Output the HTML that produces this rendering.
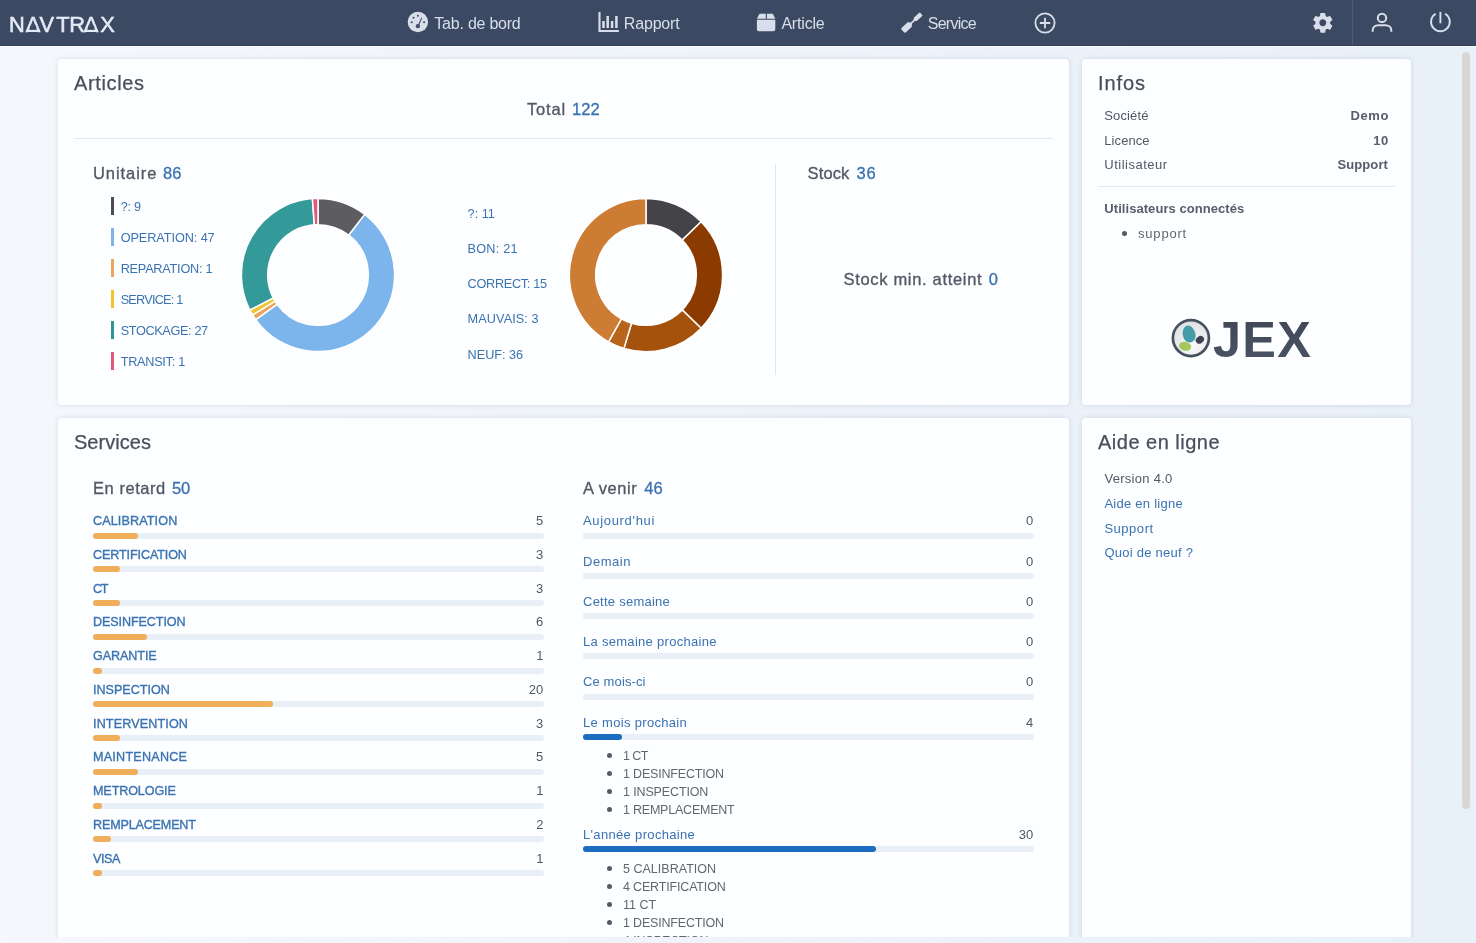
<!DOCTYPE html>
<html lang="fr">
<head>
<meta charset="utf-8">
<title>NAVTRAX - Tab. de bord</title>
<style>
*{box-sizing:border-box}
html,body{margin:0;padding:0}
body{width:1476px;height:943px;overflow:hidden;position:relative;
  font-family:"Liberation Sans",sans-serif;font-size:13px;color:#4b5260;
  background:linear-gradient(90deg,#f5f7fc 0%,#eef3fa 55%,#e8f0f8 100%)}
a{text-decoration:none}
h2,ul,li{margin:0;padding:0;font-weight:400;list-style:none}
.t{position:absolute;white-space:nowrap;display:block}
.card,#nav{will-change:transform}
.f0{font-size:16px;line-height:20px;color:#d9dfea}
.f1{font-size:20px;line-height:26px;color:#494f5b;-webkit-text-stroke:0.25px #494f5b}
.f2{font-size:16.5px;line-height:20px;color:#525864;-webkit-text-stroke:0.32px #525864}
.f3{font-size:16.5px;line-height:20px;color:#3a73b1;-webkit-text-stroke:0.32px #3a73b1}
.f4{font-size:12.7px;line-height:20px;color:#3a73b1}
.f5{font-size:13px;line-height:20px;color:#525864}
.f6{font-size:13px;line-height:20px;color:#565d6b;font-weight:700}
.f7{font-size:13px;line-height:20px;color:#62676f}
.f8{font-size:12.6px;line-height:20px;color:#3a73b1;-webkit-text-stroke:0.35px #3a73b1}
.f9{font-size:13px;line-height:20px;color:#3a73b1}
.f10{font-size:12.5px;line-height:20px;color:#62676f}

/* ---------- navbar ---------- */
#nav{position:absolute;left:0;top:0;width:1476px;height:46px;background:#3c4963;
  border-bottom:1px solid #343e56;box-shadow:0 1px 0 #f9fbfe;z-index:5}
#nav svg{position:absolute;display:block}
#nav .sep{position:absolute;left:1352px;top:0;width:1px;height:45px;background:#4d5a74}
/* ---------- cards ---------- */
#clip{position:absolute;left:0;top:45px;width:1476px;height:892px;overflow:hidden}
.card{position:absolute;background:#fdfeff;border-radius:4px;box-shadow:0 0 5px rgba(95,105,135,.2)}
.abs{position:absolute}
hr{position:absolute;margin:0;border:0;height:1px;background:#e3e7ee}
.lb{position:absolute;left:53px;width:3px;height:18px}
.bar{position:absolute;width:451px;height:6px;border-radius:3px;background:#e9eff7}
.bar i{display:block;height:6px;border-radius:3px;background:#f0ad5a}
.bar.b i{background:#1c6dc1}
li.t:before{content:"";position:absolute;left:-16px;top:7px;width:5px;height:5px;border-radius:50%;background:#545a66}
</style>
</head>
<body>

<div id="nav">
  <svg id="logo" style="left:0;top:8px" width="130" height="30" viewBox="0 0 130 30" fill="#e4eaf6">
    <text x="9.1 25.85 39.6 56.2 69.2 83.85 100.35" y="24" font-family="Liberation Sans, sans-serif" font-size="21.8" stroke="#e4eaf6" stroke-width=".55">NAVTRAX</text>
    <polygon points="29.51,20.29 36.73,20.29 35.64,17.13 30.60,17.13" fill="#3c4963"/><rect x="26.35" y="21.85" width="13.54" height="2.150"/><polygon points="87.51,20.29 94.73,20.29 93.64,17.13 88.60,17.13" fill="#3c4963"/><rect x="84.35" y="21.85" width="13.54" height="2.150"/>
  </svg>

  <!-- Tab. de bord -->
  <svg style="left:407px;top:11.400px" width="22" height="22" viewBox="0 0 22 22">
    <circle cx="10.900" cy="11" r="10.200" fill="#d9dfea"/>
    <g fill="#3c4963"><circle cx="4.700" cy="11.200" r="1.050"/><circle cx="6.500" cy="6.800" r="1.050"/><circle cx="10.900" cy="4.800" r="1.050"/><circle cx="17.100" cy="11.200" r="1.050"/>
    <circle cx="10.900" cy="15.200" r="2.100"/><path d="M14.300 6.600l.900.400-3.600 8.200-.900-.400z"/></g>
    <circle cx="10.900" cy="15.200" r=".7" fill="#55658a"/>
  </svg>
  <span class="t f0" style="left:434.35px;top:14px;letter-spacing:-0.23px">Tab. de bord</span>

  <!-- Rapport -->
  <svg style="left:597px;top:11px" width="23" height="23" viewBox="0 0 23 23" fill="none" stroke="#d9dfea">
    <path d="M2.500 .9v19.100h19.400" stroke-width="2.100"/>
    <path d="M6.500 10v7M10.700 5.100v11.900M15.100 10v7M19.400 5.100v11.900" stroke-width="2.500"/>
  </svg>
  <span class="t f0" style="left:623.85px;top:14px;letter-spacing:-0.18px">Rapport</span>

  <!-- Article -->
  <svg style="left:756px;top:12px" width="21" height="21" viewBox="0 0 21 21" fill="#d9dfea">
    <path d="M4 1.700h5.800v5H.9l2.200-4.500q.3-.5.900-.5zM10.900 1.700h5.300q.6 0 .9.500l2.200 4.500h-8.400zM.9 7.700h18.400v9.600a2 2 0 0 1-2 2H2.900a2 2 0 0 1-2-2z"/>
  </svg>
  <span class="t f0" style="left:781.4px;top:14px;letter-spacing:-0.19px">Article</span>

  <!-- Service -->
  <svg style="left:900px;top:11px" width="24" height="24" viewBox="0 0 24 24" fill="#d9dfea">
    <path transform="translate(2.760 19.970) rotate(-42.600)" d="M1.200-3.100H9.500L11.600-.9H15.600L17-2.200H24.400Q25.200-2.200 25.200-1.400V1.400Q25.200 2.200 24.400 2.200H17L15.600.9H11.600L9.500 3.100H1.200Q0 3.100 0 1.900V-1.900Q0-3.100 1.200-3.100Z"/>
  </svg>
  <span class="t f0" style="left:927.75px;top:14px;letter-spacing:-0.73px">Service</span>

  <!-- plus -->
  <svg style="left:1034px;top:11.500px" width="22" height="22" viewBox="0 0 22 22" fill="none" stroke="#d9dfea" stroke-width="1.800">
    <circle cx="11" cy="11" r="9.600"/><path d="M11 5.800v10.400M5.800 11h10.400"/>
  </svg>

  <!-- gear -->
  <svg style="left:1310.600px;top:10.600px" width="23.600" height="23.600" viewBox="0 0 24 24">
    <path fill="#d9dfea" d="M19.430 12.980c.04-.32.07-.64.07-.98s-.03-.66-.07-.98l2.110-1.650c.19-.15.240-.42.120-.64l-2-3.460c-.12-.22-.39-.3-.61-.22l-2.490 1c-.52-.4-1.080-.73-1.690-.98l-.38-2.650A.488.488 0 0 0 14 2h-4c-.25 0-.46.180-.49.420l-.38 2.650c-.61.250-1.170.59-1.690.98l-2.490-1c-.23-.09-.49 0-.61.220l-2 3.460c-.13.220-.07.49.120.64l2.110 1.650c-.04.320-.07.650-.07.980s.03.660.07.980l-2.110 1.650c-.19.150-.24.420-.12.640l2 3.460c.12.220.39.300.61.220l2.490-1c.52.400 1.080.73 1.690.98l.38 2.650c.03.240.24.420.49.420h4c.25 0 .46-.18.490-.42l.38-2.650c.61-.25 1.170-.59 1.690-.98l2.490 1c.23.090.49 0 .61-.22l2-3.460c.12-.22.070-.49-.12-.64l-2.110-1.650zM12 15.500c-1.930 0-3.500-1.570-3.500-3.500s1.570-3.500 3.500-3.500 3.500 1.570 3.500 3.500-1.570 3.500-3.500 3.500z"/>
  </svg>
  <div class="sep"></div>
  <!-- user -->
  <svg style="left:1370px;top:10px" width="24" height="24" viewBox="0 0 24 24" fill="none" stroke="#d9dfea" stroke-width="2">
    <circle cx="12" cy="7.900" r="4.200"/><path d="M2.700 21.800v-1.500c0-3.200 2.600-5 5.800-5h7c3.200 0 5.800 1.800 5.800 5v1.500"/>
  </svg>
  <!-- power -->
  <svg style="left:1428px;top:10px" width="24" height="24" viewBox="0 0 24 24" fill="none" stroke="#d9dfea" stroke-width="1.900" stroke-linecap="butt">
    <path d="M12.400 1.900v11.400"/><path d="M7.700 3.700a9.400 9.400 0 1 0 9.400 0"/>
  </svg>
</div>

<div id="clip">
<!-- ======================= Articles ======================= -->
<div class="card" id="articles" style="left:58px;top:14px;width:1011px;height:346px">
  <h2 class="t f1" style="left:16px;top:11px;letter-spacing:0.63px">Articles</h2>
  <div><span class="t f2" style="left:469.05px;top:40px;letter-spacing:0.81px">Total</span><span class="t f3" style="left:514.1px;top:40px">122</span></div>
  <hr style="left:16px;top:79px;width:979px">

  <div><span class="t f2" style="left:35px;top:104px;letter-spacing:0.94px">Unitaire</span><span class="t f3" style="left:105px;top:104px;letter-spacing:0.15px">86</span></div>
  <div class="legend"><i class="lb" style="top:138px;background:#4b4b50"></i><i class="lb" style="top:169px;background:#7cb5ec"></i><i class="lb" style="top:200px;background:#eaa45e"></i><i class="lb" style="top:231px;background:#f0c42f"></i><i class="lb" style="top:262px;background:#2f9493"></i><i class="lb" style="top:293px;background:#e05a7e"></i>
  <span class="t f4" style="left:62.7px;top:138px;letter-spacing:-0.27px">?: 9</span><span class="t f4" style="left:62.7px;top:169px;letter-spacing:-0.08px">OPERATION: 47</span><span class="t f4" style="left:62.7px;top:200px;letter-spacing:-0.23px">REPARATION: 1</span><span class="t f4" style="left:62.7px;top:231px;letter-spacing:-0.78px">SERVICE: 1</span><span class="t f4" style="left:62.7px;top:262px;letter-spacing:-0.36px">STOCKAGE: 27</span><span class="t f4" style="left:62.7px;top:293px;letter-spacing:-0.27px">TRANSIT: 1</span></div>
  <svg class="abs" style="left:182px;top:137.500px" width="156" height="156" viewBox="0 0 156 156">
<path d="M78.00 1.40A76.6 76.6 0 0 1 124.82 17.37L108.74 38.19A50.3 50.3 0 0 0 78.00 27.70Z" fill="#5c5c61" stroke="#fff" stroke-width="1.5" stroke-linejoin="round"/>
<path d="M124.82 17.37A76.6 76.6 0 1 1 15.70 122.57L37.09 107.27A50.3 50.3 0 1 0 108.74 38.19Z" fill="#7cb5ec" stroke="#fff" stroke-width="1.5" stroke-linejoin="round"/>
<path d="M15.70 122.57A76.6 76.6 0 0 1 12.61 117.90L35.06 104.20A50.3 50.3 0 0 0 37.09 107.27Z" fill="#eaa45e" stroke="#fff" stroke-width="1.5" stroke-linejoin="round"/>
<path d="M12.61 117.90A76.6 76.6 0 0 1 9.88 113.02L33.27 101.00A50.3 50.3 0 0 0 35.06 104.20Z" fill="#f0c42f" stroke="#fff" stroke-width="1.5" stroke-linejoin="round"/>
<path d="M9.88 113.02A76.6 76.6 0 0 1 72.41 1.60L74.33 27.83A50.3 50.3 0 0 0 33.27 101.00Z" fill="#339999" stroke="#fff" stroke-width="1.5" stroke-linejoin="round"/>
<path d="M72.41 1.60A76.6 76.6 0 0 1 78.00 1.40L78.00 27.70A50.3 50.3 0 0 0 74.33 27.83Z" fill="#e05a7e" stroke="#fff" stroke-width="1.5" stroke-linejoin="round"/>
  </svg>

  <div class="legend"><span class="t f4" style="left:409.6px;top:145px;letter-spacing:-0.01px">?: 11</span><span class="t f4" style="left:409.6px;top:180px;letter-spacing:0.22px">BON: 21</span><span class="t f4" style="left:409.6px;top:215px;letter-spacing:-0.3px">CORRECT: 15</span><span class="t f4" style="left:409.6px;top:250px;letter-spacing:0.08px">MAUVAIS: 3</span><span class="t f4" style="left:409.6px;top:286px;letter-spacing:-0.02px">NEUF: 36</span></div>
  <svg class="abs" style="left:510px;top:137.500px" width="156" height="156" viewBox="0 0 156 156">
<path d="M78.00 1.40A76.6 76.6 0 0 1 133.14 24.83L114.21 43.09A50.3 50.3 0 0 0 78.00 27.70Z" fill="#434348" stroke="#fff" stroke-width="1.5" stroke-linejoin="round"/>
<path d="M133.14 24.83A76.6 76.6 0 0 1 133.14 131.17L114.21 112.91A50.3 50.3 0 0 0 114.21 43.09Z" fill="#8b3a00" stroke="#fff" stroke-width="1.5" stroke-linejoin="round"/>
<path d="M133.14 131.17A76.6 76.6 0 0 1 55.93 151.35L63.51 126.17A50.3 50.3 0 0 0 114.21 112.91Z" fill="#a5530c" stroke="#fff" stroke-width="1.5" stroke-linejoin="round"/>
<path d="M55.93 151.35A76.6 76.6 0 0 1 40.51 144.80L53.38 121.86A50.3 50.3 0 0 0 63.51 126.17Z" fill="#b8651b" stroke="#fff" stroke-width="1.5" stroke-linejoin="round"/>
<path d="M40.51 144.80A76.6 76.6 0 0 1 78.00 1.40L78.00 27.70A50.3 50.3 0 0 0 53.38 121.86Z" fill="#cc7c33" stroke="#fff" stroke-width="1.5" stroke-linejoin="round"/>
  </svg>

  <div class="abs" style="left:717px;top:105px;width:1px;height:211px;background:#e2e5ea"></div>
  <div><span class="t f2" style="left:749.6px;top:104px;letter-spacing:0.12px">Stock</span><span class="t f3" style="left:798.5px;top:104px;letter-spacing:0.85px">36</span></div>
  <div><span class="t f2" style="left:785.5px;top:210px;letter-spacing:0.68px">Stock min. atteint</span><span class="t f3" style="left:930.75px;top:210px">0</span></div>
</div>

<!-- ======================= Infos ======================= -->
<div class="card" id="infos" style="left:1082px;top:14px;width:329px;height:346px">
  <h2 class="t f1" style="left:16px;top:11px;letter-spacing:0.89px">Infos</h2>
  <div><span class="t f5" style="left:22.3px;top:47px;letter-spacing:0.12px">Société</span><span class="t f6" style="left:268.55px;top:47px;letter-spacing:0.58px">Demo</span></div>
  <div><span class="t f5" style="left:22.3px;top:72px;letter-spacing:0.07px">Licence</span><span class="t f6" style="left:291.25px;top:72px;letter-spacing:0.55px">10</span></div>
  <div><span class="t f5" style="left:22.3px;top:96px;letter-spacing:0.5px">Utilisateur</span><span class="t f6" style="left:255.5px;top:96px;letter-spacing:0.09px">Support</span></div>
  <hr style="left:16px;top:127px;width:297px">
  <span class="t f6" style="left:22.3px;top:140px;letter-spacing:0.06px">Utilisateurs connectés</span>
  <ul><li class="t f7" style="left:56px;top:165px;letter-spacing:0.81px">support</li></ul>
  <svg class="abs" style="left:84px;top:258px" width="160" height="46" viewBox="0 0 160 46">
    <defs>
      <radialGradient id="jg" cx="55%" cy="70%" r="70%"><stop offset="0" stop-color="#fbfbfc"/><stop offset="1" stop-color="#dcdfe3"/></radialGradient>
      <linearGradient id="jt" x1="0" y1="0" x2="0" y2="1"><stop offset="0" stop-color="#3e4656"/><stop offset="1" stop-color="#4c5565"/></linearGradient>
    </defs>
    <circle cx="24.900" cy="21.100" r="18" fill="url(#jg)" stroke="#47505f" stroke-width="2.700"/>
    <path transform="rotate(-14 23 17)" d="M23 8.400c3.600 0 6.300 4.600 6.300 9.400 0 4.600-2.700 7.700-6.300 7.700s-6.300-3.100-6.300-7.700c0-4.800 2.700-9.400 6.300-9.400z" fill="#459da7"/>
    <ellipse cx="19.100" cy="29.300" rx="6.200" ry="4.400" transform="rotate(14 19.100 29.300)" fill="#a5c85c"/>
    <ellipse cx="33.900" cy="22.800" rx="4.400" ry="3.500" transform="rotate(-35 33.900 22.800)" fill="#3b4351"/>
    <text x="47" y="39.900" font-family="Liberation Sans, sans-serif" font-weight="700" font-size="50.400" letter-spacing="1.300" fill="url(#jt)">JEX</text>
  </svg>
</div>

<!-- ======================= Services ======================= -->
<div class="card" id="services" style="left:58px;top:373px;width:1011px;height:620px">
  <h2 class="t f1" style="left:16px;top:11px;letter-spacing:0.03px">Services</h2>
  <div><span class="t f2" style="left:35px;top:60px;letter-spacing:0.55px">En retard</span><span class="t f3" style="left:113.9px;top:60px">50</span></div>
<div class="row"><a class="t f8" style="left:35px;top:93px;letter-spacing:0.12px">CALIBRATION</a><span class="t f5" style="left:477.95px;top:93px">5</span><div class="bar" style="left:35px;top:115px"><i style="width:45px"></i></div></div>
<div class="row"><a class="t f8" style="left:35px;top:127px;letter-spacing:-0.12px">CERTIFICATION</a><span class="t f5" style="left:477.95px;top:127px">3</span><div class="bar" style="left:35px;top:148px"><i style="width:27px"></i></div></div>
<div class="row"><a class="t f8" style="left:35px;top:161px;letter-spacing:-1.45px">CT</a><span class="t f5" style="left:477.95px;top:161px">3</span><div class="bar" style="left:35px;top:182px"><i style="width:27px"></i></div></div>
<div class="row"><a class="t f8" style="left:35px;top:194px;letter-spacing:-0.11px">DESINFECTION</a><span class="t f5" style="left:477.95px;top:194px">6</span><div class="bar" style="left:35px;top:216px"><i style="width:54px"></i></div></div>
<div class="row"><a class="t f8" style="left:35px;top:228px;letter-spacing:-0.09px">GARANTIE</a><span class="t f5" style="left:478.2px;top:228px">1</span><div class="bar" style="left:35px;top:250px"><i style="width:9px"></i></div></div>
<div class="row"><a class="t f8" style="left:35px;top:262px;letter-spacing:-0.01px">INSPECTION</a><span class="t f5" style="left:470.7px;top:262px">20</span><div class="bar" style="left:35px;top:283px"><i style="width:180px"></i></div></div>
<div class="row"><a class="t f8" style="left:35px;top:296px;letter-spacing:0.13px">INTERVENTION</a><span class="t f5" style="left:477.95px;top:296px">3</span><div class="bar" style="left:35px;top:317px"><i style="width:27px"></i></div></div>
<div class="row"><a class="t f8" style="left:35px;top:329px;letter-spacing:0.23px">MAINTENANCE</a><span class="t f5" style="left:477.95px;top:329px">5</span><div class="bar" style="left:35px;top:351px"><i style="width:45px"></i></div></div>
<div class="row"><a class="t f8" style="left:35px;top:363px;letter-spacing:-0.12px">METROLOGIE</a><span class="t f5" style="left:478.2px;top:363px">1</span><div class="bar" style="left:35px;top:385px"><i style="width:9px"></i></div></div>
<div class="row"><a class="t f8" style="left:35px;top:397px;letter-spacing:-0.18px">REMPLACEMENT</a><span class="t f5" style="left:478.2px;top:397px">2</span><div class="bar" style="left:35px;top:418px"><i style="width:18px"></i></div></div>
<div class="row"><a class="t f8" style="left:35px;top:431px;letter-spacing:-0.4px">VISA</a><span class="t f5" style="left:478.2px;top:431px">1</span><div class="bar" style="left:35px;top:452px"><i style="width:9px"></i></div></div>

  <div><span class="t f2" style="left:525px;top:60px;letter-spacing:0.54px">A venir</span><span class="t f3" style="left:586.35px;top:60px;letter-spacing:0.1px">46</span></div>
<div class="row"><a class="t f9" style="left:525px;top:93px;letter-spacing:0.67px">Aujourd'hui</a><span class="t f5" style="left:968.05px;top:93px">0</span><div class="bar b" style="left:525px;top:115px"><i style="width:0px"></i></div></div>
<div class="row"><a class="t f9" style="left:525px;top:134px;letter-spacing:0.54px">Demain</a><span class="t f5" style="left:968.05px;top:134px">0</span><div class="bar b" style="left:525px;top:155px"><i style="width:0px"></i></div></div>
<div class="row"><a class="t f9" style="left:525px;top:174px;letter-spacing:0.25px">Cette semaine</a><span class="t f5" style="left:968.05px;top:174px">0</span><div class="bar b" style="left:525px;top:195px"><i style="width:0px"></i></div></div>
<div class="row"><a class="t f9" style="left:525px;top:214px;letter-spacing:0.29px">La semaine prochaine</a><span class="t f5" style="left:968.05px;top:214px">0</span><div class="bar b" style="left:525px;top:235px"><i style="width:0px"></i></div></div>
<div class="row"><a class="t f9" style="left:525px;top:254px;letter-spacing:0.12px">Ce mois-ci</a><span class="t f5" style="left:968.05px;top:254px">0</span><div class="bar b" style="left:525px;top:276px"><i style="width:0px"></i></div></div>
<div class="row"><a class="t f9" style="left:525px;top:295px;letter-spacing:0.32px">Le mois prochain</a><span class="t f5" style="left:968.05px;top:295px">4</span><div class="bar b" style="left:525px;top:316px"><i style="width:39.13px"></i></div><ul><li class="t f10" style="left:565px;top:328px;letter-spacing:-0.55px">1 CT</li><li class="t f10" style="left:565px;top:346px;letter-spacing:-0.18px">1 DESINFECTION</li><li class="t f10" style="left:565px;top:364px;letter-spacing:-0.13px">1 INSPECTION</li><li class="t f10" style="left:565px;top:382px;letter-spacing:-0.22px">1 REMPLACEMENT</li></ul></div>
<div class="row"><a class="t f9" style="left:525px;top:407px;letter-spacing:0.33px">L'année prochaine</a><span class="t f5" style="left:960.8px;top:407px">30</span><div class="bar b" style="left:525px;top:428px"><i style="width:293.48px"></i></div><ul><li class="t f10" style="left:565px;top:441px;letter-spacing:0.02px">5 CALIBRATION</li><li class="t f10" style="left:565px;top:459px;letter-spacing:-0.17px">4 CERTIFICATION</li><li class="t f10" style="left:565px;top:477px;letter-spacing:0.01px">11 CT</li><li class="t f10" style="left:565px;top:495px;letter-spacing:-0.18px">1 DESINFECTION</li><li class="t f10" style="left:565px;top:513px;letter-spacing:-0.11px">4 INSPECTION</li><li class="t f10" style="left:565px;top:531px;letter-spacing:0.02px">2 INTERVENTION</li></ul></div>

</div>

<!-- ======================= Aide ======================= -->
<div class="card" id="aide" style="left:1082px;top:373px;width:329px;height:620px">
  <h2 class="t f1" style="left:16px;top:11px;letter-spacing:0.49px">Aide en ligne</h2>
  <span class="t f5" style="left:22.4px;top:51px;letter-spacing:0.29px">Version 4.0</span>
  <a class="t f9" style="left:22.4px;top:76px;letter-spacing:0.26px">Aide en ligne</a>
  <a class="t f9" style="left:22.4px;top:101px;letter-spacing:0.53px">Support</a>
  <a class="t f9" style="left:22.4px;top:125px;letter-spacing:0.25px">Quoi de neuf ?</a>
</div>
</div>

<!-- scrollbar thumb -->
<div style="position:absolute;left:1462px;top:52px;width:8px;height:757px;border-radius:4px;background:#d7d7d7"></div>

</body>
</html>
